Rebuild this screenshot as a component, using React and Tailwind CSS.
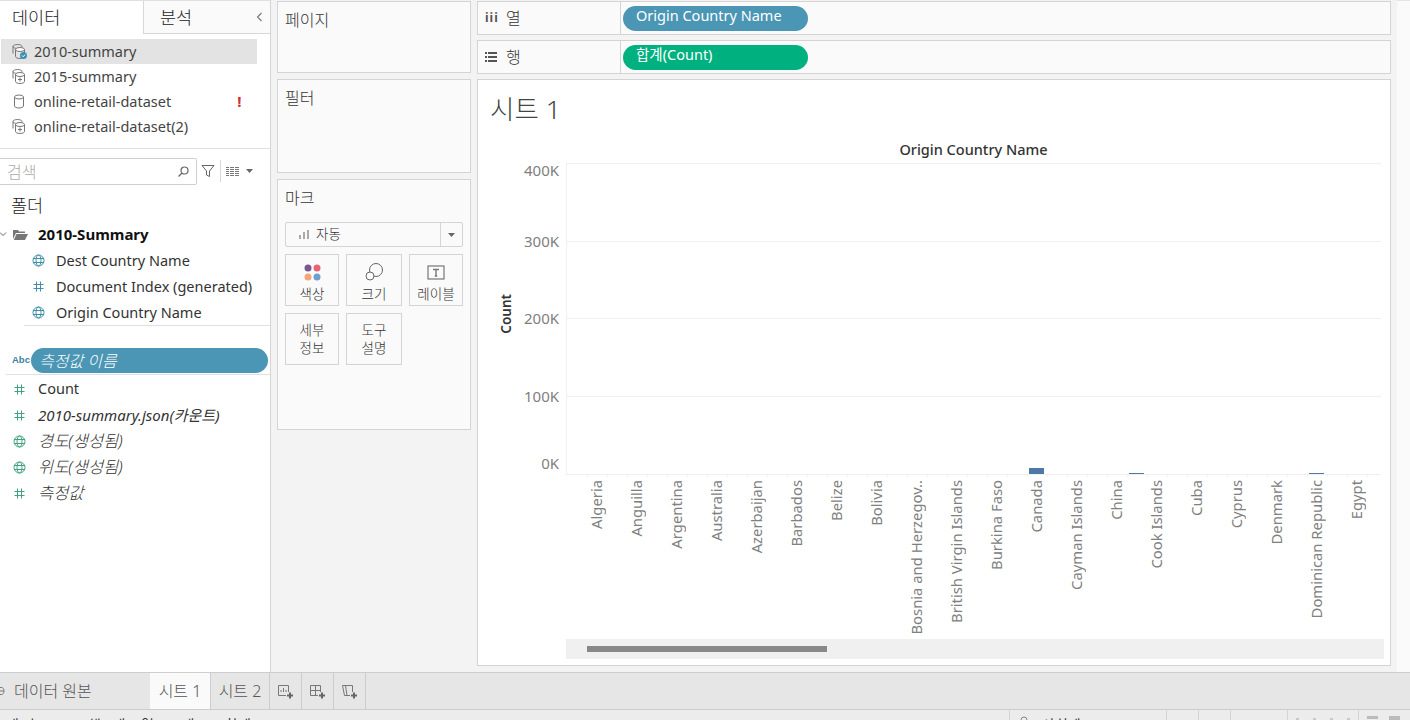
import React from 'react';

const SOURCES = [
  { name: '2010-summary', active: true, icon: 'linked' },
  { name: '2015-summary', icon: 'double' },
  { name: 'online-retail-dataset', icon: 'single', warn: true },
  { name: 'online-retail-dataset(2)', icon: 'double' },
];

const COUNTRIES = [
  'Algeria', 'Anguilla', 'Argentina', 'Australia', 'Azerbaijan', 'Barbados', 'Belize', 'Bolivia',
  'Bosnia and Herzegov..', 'British Virgin Islands', 'Burkina Faso', 'Canada', 'Cayman Islands', 'China',
  'Cook Islands', 'Cuba', 'Cyprus', 'Denmark', 'Dominican Republic', 'Egypt',
];

function Globe({ color }) {
  return (
    <svg width="13" height="13" viewBox="0 0 13 13" fill="none" stroke={color} strokeWidth="1">
      <circle cx="6.5" cy="6.5" r="5.5" />
      <ellipse cx="6.5" cy="6.5" rx="2.5" ry="5.5" />
      <path d="M1 4.5h11M1 8.5h11" />
    </svg>
  );
}

function Hash({ color }) {
  return (
    <svg className="block" width="11" height="11" viewBox="0 0 11 11" fill="none" stroke={color} strokeWidth="1">
      <path d="M3.5 0.5v10M7.5 0.5v10M0.5 3.5h10M0.5 7.5h10" />
    </svg>
  );
}

function SourceIcon({ type }) {
  if (type === 'single') {
    return (
      <svg width="12" height="15" viewBox="0 0 12 15" fill="none" stroke="#777" strokeWidth="1">
        <ellipse cx="6" cy="3" rx="4.5" ry="2" />
        <path d="M1.5 3v9c0 1 2 2 4.5 2s4.500-1 4.500-2V3" />
      </svg>
    );
  }
  return (
    <svg width="18" height="17" viewBox="0 0 18 17" fill="none" stroke="#777" strokeWidth="1">
      <path d="M3 10.500V3.500C3 2.400 5 1.500 7.500 1.500S12 2.400 12 3.500v1" />
      <path d="M3 3.500c0 1.100 2 2 4.500 2" />
      <ellipse cx="10" cy="6.500" rx="4.500" ry="2" fill="#fff" />
      <path d="M5.500 6.500v7c0 1.100 2 2 4.500 2s4.500-.9 4.500-2v-7" />
      {type === 'linked' ? (
        <>
          <circle cx="13.500" cy="12.500" r="3.500" fill="#3f8fb5" stroke="none" />
          <path d="M12 12.500l1.200 1.200 2-2.200" stroke="#fff" />
        </>
      ) : (
        <path d="M10 9.500v4M8 11.500h4" />
      )}
    </svg>
  );
}

function ShelfBar({ glyph, label, pill, pillColor }) {
  return (
    <div className="flex h-[34px] border border-[#d4d4d4] bg-[#fafafa]">
      <div className="flex w-[143px] items-center gap-[9px] border-r border-[#d4d4d4] pl-[7px] text-[16px] font-light text-[#333]">
        {glyph}
        <span>{label}</span>
      </div>
      <div className="flex items-center pl-[2px]">
        <div className={`flex h-[25px] w-[185px] items-center rounded-full pb-[4px] pl-[13px] text-[14.500px] text-white ${pillColor}`}>
          {pill}
        </div>
      </div>
    </div>
  );
}

function MarkButton({ width, children, label }) {
  return (
    <div className={`flex h-[52px] flex-col items-center border border-[#d4d4d4] text-[13.500px] font-light leading-[18px] text-[#333] ${children ? 'pt-[8px]' : 'justify-center'} ${width}`}>
      {children && <div className="flex h-[18px] items-center">{children}</div>}
      <span className={`whitespace-pre-line text-center ${children ? 'mt-[4px]' : ''}`}>{label}</span>
    </div>
  );
}

function Sidebar() {
  return (
    <aside className="flex w-[271px] shrink-0 flex-col border-r border-[#d4d4d4] bg-white text-[#333]">
      <div className="flex h-[34px] border-t border-[#e0e0e0] text-[17.500px] font-light text-[#222]">
        <div className="flex w-[143px] items-center pl-[12px]">데이터</div>
        <div className="flex flex-1 items-center justify-between border-b border-l border-[#d8d8d8] bg-[#fafafa] pl-[16px] pr-[7px]">
          <span>분석</span>
          <svg width="7" height="10" viewBox="0 0 7 10" fill="none" stroke="#777" strokeWidth="1.100">
            <path d="M5.500 1L1.500 5l4 4" />
          </svg>
        </div>
      </div>

      <div className="border-b border-[#e0e0e0] pb-[9px] pt-[5px]">
        {SOURCES.map((s) => (
          <div key={s.name} className={`ml-[1px] flex h-[25px] w-[256px] items-center text-[14.500px] text-[#444] ${s.active ? 'bg-[#e3e3e3]' : ''}`}>
            <span className="flex w-[33px] justify-center pl-[2px]">
              <SourceIcon type={s.icon} />
            </span>
            <span>{s.name}</span>
            {s.warn && <span className="ml-[66px] text-[15px] font-bold text-[#c8303c]">!</span>}
          </div>
        ))}
      </div>

      <div className="mt-[8px] flex h-[28px] items-center">
        <div className="flex h-[27px] w-[197px] items-center justify-between rounded-r-[2px] border border-l-0 border-[#cfcfcf] pl-[7px] pr-[7px] pt-[1px] text-[16px] font-light text-[#aaa]">
          <span>검색</span>
          <svg width="12" height="12" viewBox="0 0 12 12" fill="none" stroke="#666" strokeWidth="1.200">
            <circle cx="7.500" cy="4.500" r="3.500" />
            <path d="M5 7l-3.500 3.500" />
          </svg>
        </div>
        <svg className="ml-[4px]" width="14" height="14" viewBox="0 0 14 14" fill="none" stroke="#666" strokeWidth="1">
          <path d="M1 1.500h12L8.500 7v5.500l-3-1.500V7z" />
        </svg>
        <div className="ml-[5px] h-[22px] w-px bg-[#d8d8d8]" />
        <svg className="ml-[5px]" width="13" height="9" viewBox="0 0 13 9" fill="#777">
          <path d="M0 0h3v1H0zM4 0h4v1H4zM9 0h4v1H9zM0 2h3v1H0zM4 2h4v1H4zM9 2h4v1H9zM0 4h3v1H0zM4 4h4v1H4zM9 4h4v1H9zM0 6h3v1H0zM4 6h4v1H4zM9 6h4v1H9zM0 8h3v1H0zM4 8h4v1H4zM9 8h4v1H9z" />
        </svg>
        <svg className="ml-[7px]" width="7" height="4" viewBox="0 0 7 4" fill="#666">
          <path d="M0 0h7L3.500 4z" />
        </svg>
      </div>

      <div className="mt-[7px] flex h-[26px] items-center pl-[11px] text-[17.500px] font-light text-[#222]">폴더</div>

      <div className="mt-[3px] flex h-[26px] items-center text-[15px] font-bold text-[#111]">
        <svg className="ml-[-1px]" width="8" height="5" viewBox="0 0 8 5" fill="none" stroke="#666" strokeWidth="1">
          <path d="M1 .5l3 3 3-3" />
        </svg>
        <svg className="ml-[6px]" width="15" height="11" viewBox="0 0 15 11" fill="#777">
          <path d="M0 1h5l1 1.500h6V4H3L0 10z" />
          <path d="M3.500 5H15l-3 6H.8z" />
        </svg>
        <span className="ml-[10px]">2010-Summary</span>
      </div>

      <div className="ml-[24px] border-b border-[#e0e0e0]">
        {[
          { name: 'Dest Country Name', icon: <Globe color="#3f8fa8" /> },
          { name: 'Document Index (generated)', icon: <Hash color="#3f8fa8" /> },
          { name: 'Origin Country Name', icon: <Globe color="#3f8fa8" /> },
        ].map((f) => (
          <div key={f.name} className="flex h-[26px] items-center pt-[1px] text-[14.500px] text-[#333]">
            <span className="flex w-[32px] justify-center pr-[4px]">{f.icon}</span>
            <span>{f.name}</span>
          </div>
        ))}
      </div>

      <div className="ml-[6px] mt-[22px] flex items-center border-b border-[#e0e0e0] pb-px">
        <span className="w-[25px] pl-[6px] font-['Liberation_Sans',sans-serif] text-[9.500px] font-bold text-[#3f7f9f]">Abc</span>
        <div className="flex h-[25px] w-[237px] items-center rounded-full bg-[#4b96b4] pl-[8px] text-[16px] font-light italic text-white">측정값 이름</div>
      </div>

      <div className="mt-[1px]">
        {[
          { name: 'Count', icon: <Hash color="#3fa37c" />, size: 'text-[14.500px]' },
          { name: '2010-summary.json(카운트)', icon: <Hash color="#3fa37c" />, italic: true, size: 'text-[15px]' },
          { name: '경도(생성됨)', icon: <Globe color="#3fa37c" />, italic: true, size: 'text-[16.500px] font-light' },
          { name: '위도(생성됨)', icon: <Globe color="#3fa37c" />, italic: true, size: 'text-[16.500px] font-light' },
          { name: '측정값', icon: <Hash color="#3fa37c" />, italic: true, size: 'text-[16.500px] font-light' },
        ].map((f) => (
          <div key={f.name} className={`flex h-[26px] items-center text-[#333] ${f.size} ${f.italic ? 'italic' : ''}`}>
            <span className="flex w-[38px] justify-center">{f.icon}</span>
            <span>{f.name}</span>
          </div>
        ))}
      </div>
    </aside>
  );
}

function CardsColumn() {
  return (
    <div className="ml-[6px] flex w-[194px] shrink-0 flex-col gap-[6px] pt-px">
      <div className="h-[72px] border border-[#d4d4d4] bg-[#fafafa] pl-[7px] pt-[6px] text-[16px] font-light text-[#333]">페이지</div>
      <div className="h-[94px] border border-[#d4d4d4] bg-[#fafafa] pl-[7px] pt-[6px] text-[16px] font-light text-[#333]">필터</div>
      <div className="h-[251px] border border-[#d4d4d4] bg-[#fafafa] px-[7px] pt-[6px] text-[#333]">
        <div className="text-[16px] font-light">마크</div>
        <div className="mt-[12px] flex h-[25px] items-center rounded-[2px] border border-[#d4d4d4] text-[13.500px] font-light">
          <svg className="ml-[13px]" width="10" height="9" viewBox="0 0 10 9" fill="#aaa">
            <path d="M0 5h2v4H0zM4 2h2v7H4zM8 0h2v9H8z" />
          </svg>
          <span className="ml-[7px] flex-1">자동</span>
          <span className="flex h-full w-[22px] items-center justify-center border-l border-[#d4d4d4]">
            <svg width="7" height="4" viewBox="0 0 7 4" fill="#666"><path d="M0 0h7L3.500 4z" /></svg>
          </span>
        </div>
        <div className="mt-[7px] flex gap-[7px]">
          <MarkButton width="w-[54px]" label="색상">
            <svg width="17" height="17" viewBox="0 0 17 17">
              <circle cx="4" cy="4" r="3.500" fill="#76598f" />
              <circle cx="13" cy="4" r="3.500" fill="#e8627a" />
              <circle cx="4" cy="13" r="3.500" fill="#f2a77b" />
              <circle cx="13" cy="13" r="3.500" fill="#6f9fcd" />
            </svg>
          </MarkButton>
          <MarkButton width="w-[56px]" label="크기">
            <svg width="18" height="18" viewBox="0 0 18 18" fill="none" stroke="#666" strokeWidth="1">
              <circle cx="11" cy="7" r="6.500" />
              <circle cx="5" cy="13" r="4" fill="#fafafa" />
            </svg>
          </MarkButton>
          <MarkButton width="w-[54px]" label="레이블">
            <svg width="18" height="15" viewBox="0 0 18 15" fill="none" stroke="#777" strokeWidth="1.200">
              <rect x="1" y="1" width="16" height="13" />
              <path d="M6 4.500h6M9 4.500v6.500M7.800 11h2.400" strokeWidth="1.400" />
            </svg>
          </MarkButton>
        </div>
        <div className="mt-[7px] flex gap-[7px]">
          <MarkButton width="w-[54px]" label={'세부\n정보'} />
          <MarkButton width="w-[56px]" label={'도구\n설명'} />
        </div>
      </div>
    </div>
  );
}

function Chart() {
  return (
    <div className="flex h-[587px] flex-col border border-[#d4d4d4] bg-white">
      <div className="h-[47px] pl-[12px] pt-[11px] text-[26.500px] font-light leading-[36px] text-[#444]">시트 1</div>
      <div className="flex flex-1">
        <div className="relative w-[88px] shrink-0">
          <span className="absolute left-[19px] top-[167px] rotate-180 text-[13.500px] font-semibold leading-[18px] text-[#333] [writing-mode:vertical-rl]">Count</span>
          <div className="flex flex-col items-end pr-[7px] pt-[34px] text-[15px] leading-[18px] text-[#808080]">
            <span>400K</span>
            <span className="mt-[53px]">300K</span>
            <span className="mt-[59px]">200K</span>
            <span className="mt-[60px]">100K</span>
            <span className="mt-[49px]">0K</span>
          </div>
        </div>
        <div className="flex w-[818px] flex-col">
          <div className="flex h-[36px] w-[815px] items-center justify-center pt-[9px] text-[14.500px] font-medium text-[#333]">Origin Country Name</div>
          <svg className="block" width="815" height="315" viewBox="0 0 815 315">
            <path d="M0.500 0V311" stroke="#f0f0f0" fill="none" />
            <path d="M0 0.500H815M0 78.500H815M0 155.500H815M0 233.500H815M0 311.500H815" stroke="#f0f0f0" fill="none" />
            {Array.from({ length: 40 }, (_, i) => (
              <path key={i} d={`M${21.500 + i * 20} 311V314`} stroke="#f0f0f0" />
            ))}
            <rect x="463" y="305" width="15" height="6" fill="#4e79a7" />
            <rect x="563" y="310" width="15" height="1" fill="#4e79a7" />
            <rect x="743" y="310" width="15" height="1" fill="#4e79a7" />
          </svg>
          <div className="flex h-[161px] pl-[10px] pt-[2px]">
            {COUNTRIES.map((c) => (
              <div key={c} className="flex w-[40px] shrink-0 justify-center">
                <span className="h-fit rotate-180 whitespace-nowrap text-[14.800px] leading-[18px] text-[#808080] [writing-mode:vertical-rl]">{c}</span>
              </div>
            ))}
          </div>
          <div className="flex h-[20px] items-center bg-[#f0f0f0] pl-[21px]">
            <div className="h-[6px] w-[240px] bg-[#888]" />
          </div>
        </div>
      </div>
    </div>
  );
}

function TabBar() {
  return (
    <div className="flex h-[38px] shrink-0 border-y border-[#cdcdcd] bg-[#e6e6e6] text-[16px] font-light text-[#555]">
      <div className="flex w-[150px] items-center">
        <svg className="ml-[-5px]" width="10" height="10" viewBox="0 0 10 10" fill="none" stroke="#777" strokeWidth="1">
          <path d="M1 1.500h5.500c1.500 0 2.500 1.500 2.500 3.500S8 8.500 6.500 8.500H1M3.500 5H9" />
        </svg>
        <span className="ml-[9px]">데이터 원본</span>
      </div>
      <div className="flex w-[61px] items-center justify-center border-r border-[#cdcdcd] bg-[#fafafa]">시트 1</div>
      <div className="flex w-[59px] items-center justify-center border-r border-[#cdcdcd]">시트 2</div>
      <div className="flex w-[32px] items-center justify-center border-r border-[#cdcdcd]">
        <svg width="15" height="15" viewBox="0 0 15 15" fill="none" stroke="#777" strokeWidth="1">
          <path d="M8 11.500H.5v-10h10V8M3 8V6M5.500 8V4M8 8V6" />
          <path d="M12 8.500v6M9 11.500h6" strokeWidth="2" stroke="#666" />
        </svg>
      </div>
      <div className="flex w-[32px] items-center justify-center border-r border-[#cdcdcd]">
        <svg width="15" height="15" viewBox="0 0 15 15" fill="none" stroke="#777" strokeWidth="1">
          <path d="M8 11.500H.5v-10h10V8M.5 6.500h10M5.500 1.500v10" />
          <path d="M12 8.500v6M9 11.500h6" strokeWidth="2" stroke="#666" />
        </svg>
      </div>
      <div className="flex w-[32px] items-center justify-center border-r border-[#cdcdcd]">
        <svg width="15" height="15" viewBox="0 0 15 15" fill="none" stroke="#777" strokeWidth="1">
          <path d="M8 11.500H2.500L.5 1.500h10V8M3.500 1.500l1.500 10" />
          <path d="M12 8.500v6M9 11.500h6" strokeWidth="2" stroke="#666" />
        </svg>
      </div>
    </div>
  );
}

function StatusBar() {
  return (
    <div className="flex flex-1 bg-[#ececec] text-[14px] leading-[20px] text-[#333]">
      <div className="flex w-[1009px] gap-[16px] whitespace-nowrap pt-[5px]">
        <span className="ml-[-2px] w-[74px]">1개 마크</span>
        <span className="w-[37px]">행 1개</span>
        <span className="w-[68px]">열 121개</span>
        <span>합계(Count): 123,000</span>
      </div>
      <div className="flex w-[157px] border-l border-[#d4d4d4] pl-[8px] pt-[6px]">
        <svg width="12" height="14" viewBox="0 0 12 14" fill="none" stroke="#888">
          <circle cx="6" cy="4" r="3" />
          <path d="M1 13c0-3 2-5 5-5s5 2 5 5" />
        </svg>
        <span className="ml-[12px] mt-[-1px]">사회계</span>
      </div>
      <div className="w-[32px] border-l border-[#d4d4d4]" />
      <div className="w-[32px] border-l border-[#d4d4d4]" />
      <div className="w-[57px] border-l border-[#d4d4d4]" />
      <div className="flex w-[71px] gap-[14px] border-l border-[#d4d4d4] pl-[8px] pt-[8px]">
        {[0, 1, 2, 3].map((i) => (
          <span key={i} className="h-[6px] w-[3px] bg-[#c8c8c8]" />
        ))}
      </div>
      <div className="flex flex-1 border-l border-[#d4d4d4] pl-[8px] pt-[6px]">
        <span className="h-[3px] w-[11px] bg-[#bbb]" />
        <span className="ml-[11px] h-[6px] w-[11px] bg-[#bbb]" />
      </div>
    </div>
  );
}

export default function App() {
  return (
    <div className="flex h-[720px] w-[1410px] flex-col overflow-hidden bg-[#f3f3f3] font-['Noto_Sans','Noto_Sans_CJK_KR',sans-serif]">
      <div className="flex h-[672px] shrink-0">
        <Sidebar />
        <CardsColumn />
        <div className="ml-[6px] flex w-[914px] shrink-0 flex-col gap-[5px] pt-px">
          <ShelfBar
            label="열"
            pill="Origin Country Name"
            pillColor="bg-[#4b96b4]"
            glyph={<span className="w-[12px] text-[12px] font-bold tracking-[1px] text-[#555]">iii</span>}
          />
          <ShelfBar
            label="행"
            pill="합계(Count)"
            pillColor="bg-[#00b180]"
            glyph={
              <svg width="12" height="10" viewBox="0 0 12 10" fill="#555">
                <path d="M0 0h2v2H0zM3 0h9v2H3zM0 4h2v2H0zM3 4h9v2H3zM0 8h2v2H0zM3 8h9v2H3z" />
              </svg>
            }
          />
          <Chart />
        </div>
        <div className="ml-[6px] flex-1 border-t border-[#e4e4e4] bg-[#fafafa]" />
      </div>
      <TabBar />
      <StatusBar />
    </div>
  );
}
